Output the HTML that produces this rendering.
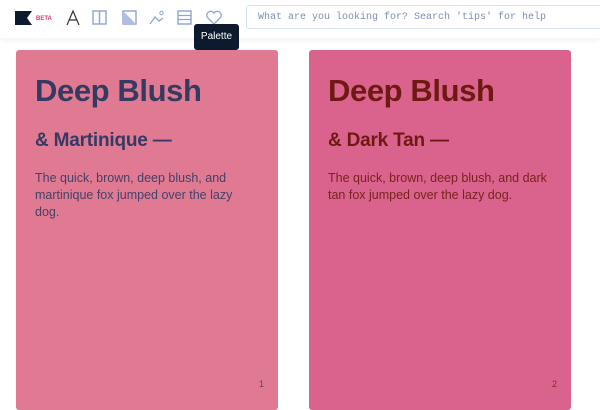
<!DOCTYPE html>
<html><head><meta charset="utf-8"><style>
*{margin:0;padding:0;box-sizing:border-box}
body{width:600px;height:400px;overflow:hidden;background:#fff;font-family:"Liberation Sans",sans-serif;position:relative}
.hdr{position:absolute;left:0;top:0;width:600px;height:38px;background:#fff;box-shadow:0 2px 6px rgba(0,0,0,.06);z-index:2}
.search{position:absolute;left:246px;top:5px;width:360px;height:24px;border:1px solid #d6e2f5;border-radius:3px;font-family:"Liberation Mono",monospace;font-size:10px;color:#7e8fb5;padding:6px 11px}
.tip{position:absolute;left:194px;top:24px;width:45px;height:26px;background:#0d1a2d;border-radius:3px;color:#fff;font-size:10px;text-align:center;line-height:26px;z-index:3}
.card{position:absolute;top:50px;height:360px;width:262px;border-radius:3px}
.c1{left:16px;background:#e07a92;color:#343a62}
.c2{left:309px;background:#d9638c;color:#6e1a12}
h1{position:absolute;left:19px;top:23px;font-size:31px;font-weight:bold;letter-spacing:-.4px}
h2{position:absolute;left:19px;top:80px;font-size:19px;font-weight:bold;letter-spacing:-.2px}
p{position:absolute;left:19px;top:120px;width:225px;font-size:12.5px;line-height:17px;opacity:.9}
.n{position:absolute;right:14px;top:329px;font-size:9px;opacity:.8}
</style></head><body>
<div class="hdr">
<svg width="240" height="38" style="position:absolute;left:0;top:0">
<path d="M15 11h17l-5 7 5 7H15z" fill="#0d1a2d"/>
<text x="36" y="20" font-size="6" font-weight="bold" fill="#e8336b" font-family="Liberation Sans">BETA</text>
<path d="M67 25l6-14 6 14M69 20h8" stroke="#333" stroke-width="1.2" fill="none"/>
<rect x="93" y="11" width="13" height="13" fill="none" stroke="#8ea3d6" stroke-width="1.4"/><path d="M99.5 11v13" stroke="#8ea3d6" stroke-width="1.4"/>
<rect x="123" y="11" width="13" height="13" fill="none" stroke="#8ea3d6" stroke-width="1.4"/><path d="M123 11l13 13H123z" fill="#aebde4"/>
<path d="M150 24l5-7 4 4 4-3" stroke="#8ea3d6" stroke-width="1.3" fill="none"/><circle cx="161.5" cy="13" r="1.7" fill="none" stroke="#8ea3d6"/>
<rect x="178" y="11" width="13" height="13" fill="none" stroke="#8ea3d6" stroke-width="1.4"/><path d="M178 15.5h13M178 19.5h13" stroke="#8ea3d6" stroke-width="1.2"/>
<path d="M214 24l-6.5-6.5a3.8 3.8 0 016.5-4.5 3.8 3.8 0 016.5 4.5z" fill="none" stroke="#8ea3d6" stroke-width="1.3"/>
</svg>
<div class="search">What are you looking for? Search 'tips' for help</div>
</div>
<div class="tip">Palette</div>
<div class="card c1"><h1>Deep Blush</h1><h2>&amp; Martinique —</h2><p>The quick, brown, deep blush, and martinique fox jumped over the lazy dog.</p><div class="n">1</div></div>
<div class="card c2"><h1>Deep Blush</h1><h2>&amp; Dark Tan —</h2><p>The quick, brown, deep blush, and dark tan fox jumped over the lazy dog.</p><div class="n">2</div></div>
</body></html>
